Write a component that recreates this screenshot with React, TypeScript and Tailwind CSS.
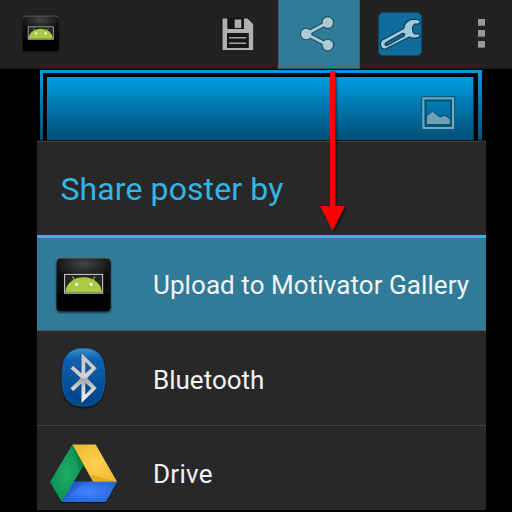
import React from "react";

function MotivatorIcon({ className }: { className: string }) {
  return (
    <svg viewBox="0 0 60 62" className={className}>
      <defs>
        <radialGradient id="tile" cx="50%" cy="20%" r="60%">
          <stop offset="0" stopColor="#444444" />
          <stop offset="1" stopColor="#0e0e0e" />
        </radialGradient>
        <linearGradient id="edge" x1="0" y1="0" x2="0" y2="1">
          <stop offset="0" stopColor="#707070" />
          <stop offset="0.12" stopColor="#1a1a1a" />
          <stop offset="0.5" stopColor="#0a0a0a" />
          <stop offset="1" stopColor="#000" />
        </linearGradient>
        <filter id="tileShadow" x="-20%" y="-20%" width="140%" height="150%">
          <feDropShadow dx="0" dy="1.5" stdDeviation="1.3" floodOpacity="0.75" />
        </filter>
      </defs>
      <rect x="2.6" y="2.6" width="54" height="53.4" rx="4" fill="url(#edge)" filter="url(#tileShadow)" />
      <path d="M3.2 7Q3.2 3.6 7 3.6H52.5Q56 3.6 56 7V25Q30 24 3.2 29Z" fill="url(#tile)" />
      <rect x="10.6" y="19.4" width="38" height="18.8" fill="#252525" stroke="#c4c4c4" strokeWidth="1.1" />
      <path d="M18.5 21.5l2.6 5M41 21.5l-2.6 5" stroke="#87a33a" strokeWidth="1.4" />
      <path d="M11.4 37.4A18.2 15.2 0 0 1 47.8 37.4Z" fill="#a9cb43" />
      <circle cx="22.6" cy="29.3" r="1.6" fill="#fff" />
      <circle cx="37.2" cy="29.3" r="1.6" fill="#fff" />
    </svg>
  );
}

function SaveIcon() {
  return (
    <svg viewBox="0 0 36 37" className="h-[37px] w-9 shrink-0">
      <path d="M2 2H27.5L33.8 8.3V34.7H2Z" fill="#b0b0b0" stroke="#121212" strokeWidth="1" />
      <path d="M7.3 1.5H24V13H7.3Z" fill="#171717" />
      <path d="M14.7 3.5H21.3V12H14.7Z" fill="#adadad" />
      <path d="M7 17H28.8V32H7Z" fill="#171717" />
      <path d="M9 21.7H26.2M9 27.2H26.2" stroke="#a5a5a5" strokeWidth="1.4" />
    </svg>
  );
}

function ShareIcon() {
  return (
    <svg viewBox="0 0 36 38" className="h-[38px] w-9 shrink-0">
      <g fill="#1c5267" stroke="#1c5267">
        <path d="M27.8 7.5L6.2 19L27.8 30" fill="none" strokeWidth="5" />
        <circle cx="27.8" cy="7.5" r="6" />
        <circle cx="6.2" cy="19" r="5.8" />
        <circle cx="27.8" cy="30" r="6" />
      </g>
      <g fill="#acc9d4">
        <path d="M27.8 7.5L6.2 19L27.8 30" fill="none" stroke="#acc9d4" strokeWidth="2.7" />
        <circle cx="27.8" cy="7.5" r="5.2" />
        <circle cx="6.2" cy="19" r="5.2" />
        <circle cx="27.8" cy="30" r="5.2" />
      </g>
    </svg>
  );
}

function WrenchIcon() {
  return (
    <svg viewBox="0 0 46 46" className="size-[46px] shrink-0">
      <rect x="1.6" y="1.6" width="43" height="43" rx="5" fill="#106d9b" stroke="#0b4b69" />
      <path
        d="M5 29.3L26.8 17.3C27 12.5 31 8.2 37 8.2Q43.3 8.6 43.3 11.2Q43 13.2 40 13.2H37.5Q35.3 15 35.5 18Q35.4 20.7 37.5 22.8H40.5Q43.5 23 43.3 25Q41.5 27.5 37 27.2Q34.5 27 32.5 26L9.5 37.7Q5.5 39.2 3.8 35.5Q2.7 31.2 5 29.3Z"
        fill="#a6c9da"
        stroke="#0c455f"
        strokeWidth="1.3"
      />
      <path d="M9.2 31.6L25 22.6Q28 21.7 27.6 24Q27.4 25 25.8 25.8L11 33.9Q8 35.3 8 33Q8 32.3 9.2 31.6Z" fill="#106d9b" stroke="#0c455f" strokeWidth="1.3" />
    </svg>
  );
}

function PictureIcon() {
  return (
    <svg viewBox="0 0 36 36" className="size-9">
      <path d="M3.4 3.2H33.2V32.8H3.4Z" fill="none" stroke="#075c80" strokeWidth="4.4" />
      <path d="M3.4 3.4H33V33H3.4Z" fill="none" stroke="#70a9bf" strokeWidth="2.2" />
      <path d="M5.6 5.6H30.9V30.8H5.6Z" fill="none" stroke="#06506f" strokeWidth="1.6" />
      <path d="M6.4 29.5V21L12.5 16.2L19.5 22L25 20.5L30.3 24V29.5Z" fill="#70a0b4" stroke="#064b6b" strokeWidth="0.9" />
    </svg>
  );
}

function BluetoothIcon() {
  return (
    <svg viewBox="0 0 50 64" className="h-16 w-[50px]">
      <defs>
        <linearGradient id="btBg" x1="0" y1="0" x2="0" y2="1">
          <stop offset="0" stopColor="#3d8bcb" />
          <stop offset="0.2" stopColor="#0b60ae" />
          <stop offset="1" stopColor="#00458a" />
        </linearGradient>
        <linearGradient id="btRune" x1="0" y1="0" x2="0" y2="1">
          <stop offset="0" stopColor="#c5c5c5" />
          <stop offset="0.48" stopColor="#d1d1d1" />
          <stop offset="0.53" stopColor="#a5a5a5" />
          <stop offset="0.7" stopColor="#d4d4d4" />
          <stop offset="1" stopColor="#f4f4f4" />
        </linearGradient>
        <filter id="btShadow" x="-20%" y="-20%" width="140%" height="150%">
          <feDropShadow dx="0" dy="1.3" stdDeviation="1" floodOpacity="0.8" />
        </filter>
      </defs>
      <path
        d="M25.5 2.5C40.5 2.5 46.8 10 46.8 31S40.5 60 25.5 60S4.2 52 4.2 31S10.5 2.5 25.5 2.5Z"
        fill="url(#btBg)"
        stroke="#126ab5"
        strokeWidth="0.6"
        filter="url(#btShadow)"
      />
      <path
        d="M23.2 6.5L39 22.3L29.5 32L39 42.3L23.2 57.5V38L15.2 45.3L12.2 42.3L22.5 32L12.2 22.6L15.2 19.6L23.2 26.8ZM27.6 16.2V26.8L33.2 22ZM27.6 37.3V48L33.2 42.3Z"
        fillRule="evenodd"
        fill="url(#btRune)"
        stroke="#0b3e76"
        strokeWidth="0.5"
      />
    </svg>
  );
}

function DriveIcon() {
  return (
    <svg viewBox="0 0 72 64" className="h-16 w-[72px] shrink-0">
      <defs>
        <radialGradient id="gdYellow"><stop stopColor="#ffd253" /><stop offset="1" stopColor="#f1bd35" /></radialGradient>
        <radialGradient id="gdGreen"><stop stopColor="#20ac65" /><stop offset="1" stopColor="#0a9354" /></radialGradient>
        <radialGradient id="gdBlue"><stop stopColor="#4385ff" /><stop offset="1" stopColor="#2769de" /></radialGradient>
        <filter id="gdShadow"><feDropShadow dx="0" dy="1" stdDeviation="0.7" floodOpacity="0.7" /></filter>
      </defs>
      <g filter="url(#gdShadow)">
        <path d="M24.3 2.5L35.7 23L13.8 60L2 40Z" fill="url(#gdGreen)" />
        <path d="M24.3 2.5H47.7L69.2 40H45.3Z" fill="url(#gdYellow)" />
        <path d="M25.5 39.6H69.2L57.7 60H13.8Z" fill="url(#gdBlue)" />
      </g>
      <path d="M24.3 2.5L35.7 23L32 29Z" fill="#08713f" opacity="0.5" />
      <path d="M41.5 32.5L69.2 39.6H45.3Z" fill="#d59d20" opacity="0.6" />
      <path d="M25.5 39.6H36.5L13.8 60Z" fill="#204fb5" opacity="0.5" />
    </svg>
  );
}

function ArrowOverlay() {
  return (
    <svg viewBox="0 0 40 170" className="pointer-events-none absolute left-[313px] top-[68px] h-[170px] w-10">
      <defs>
        <filter id="arrowShadow" x="-30%" y="-5%" width="170%" height="115%">
          <feDropShadow dx="1.3" dy="1.3" stdDeviation="0.9" floodOpacity="0.75" />
        </filter>
      </defs>
      <path d="M17 4.5Q17 3 18.5 3H20.7Q22.2 3 22.2 4.5V138H32L19.5 162.5L7.2 138H17Z" fill="#ff0000" filter="url(#arrowShadow)" />
    </svg>
  );
}

export default function App() {
  return (
    <div className="relative h-[512px] w-[512px] overflow-hidden bg-black font-['Roboto',sans-serif]">
      <header className="flex h-[69px] border-b-2 border-[#1b1b1b] bg-[#222222]">
        <div className="flex w-[200px] pl-[21px] pt-[14px]">
          <MotivatorIcon className="h-[41px] w-10" />
        </div>
        <button className="flex w-[78px] pl-5 pt-4"><SaveIcon /></button>
        <button className="flex h-[69px] w-[82px] border-x border-b border-x-[#38606f] border-b-[#245b70] bg-[#307c98] pl-[21px] pt-[15px]"><ShareIcon /></button>
        <button className="flex w-[97px] pl-[17px] pt-[11px]"><WrenchIcon /></button>
        <button className="flex flex-col gap-1 pl-[21px] pt-[19px]">
          <i className="h-[7px] w-[7px] border-b border-[#717171] bg-[#999999]" />
          <i className="h-[7px] w-[7px] border-b border-[#717171] bg-[#999999]" />
          <i className="h-[7px] w-[7px] border-b border-[#717171] bg-[#999999]" />
        </button>
      </header>
      <main className="flex h-[443px] flex-col pt-px">
        <div className="ml-10 h-[70px] w-[442px] bg-linear-to-b from-[#009ce4] to-[#005379] pl-[3px] pr-1 pt-[3px]">
          <div className="h-full bg-black px-1 pt-1">
            <div className="flex h-full w-[427px] justify-end border-r border-[#003c5a] bg-linear-to-b from-[#009ce2] to-[#005077] pr-[17px] pt-[18px]">
              <PictureIcon />
            </div>
          </div>
        </div>
        <section className="ml-[37px] h-[370px] w-[449px] overflow-hidden border-t border-[#171717] bg-[#282828]">
          <h1 className="h-[97px] whitespace-nowrap border-b-[3px] border-t border-b-[#33b5e5] border-t-[#3d3d3d] pl-[23.5px] pt-7 text-[32px] leading-[38px] tracking-[0.1px] text-[#33b5e5]">Share poster by</h1>
          <ul className="text-[26px] leading-[30px] text-[#f3f3f3]">
            <li className="flex h-[93px] border-b border-[#50595c] bg-[#307c98]">
              <div className="w-[116px] pl-[17px] pt-[17px]"><MotivatorIcon className="h-[62px] w-[60px]" /></div>
              <span className="whitespace-nowrap pt-8 tracking-[0.07px]">Upload to Motivator Gallery</span>
            </li>
            <li className="flex h-[95px] border-b border-[#444444]">
              <div className="w-[116px] pl-[21px] pt-[15px]"><BluetoothIcon /></div>
              <span className="pt-[34px]">Bluetooth</span>
            </li>
            <li className="flex h-[84px]">
              <div className="w-[116px] pl-[11px] pt-4"><DriveIcon /></div>
              <span className="pt-[33px] tracking-[0.3px]">Drive</span>
            </li>
          </ul>
        </section>
      </main>
      <ArrowOverlay />
    </div>
  );
}
